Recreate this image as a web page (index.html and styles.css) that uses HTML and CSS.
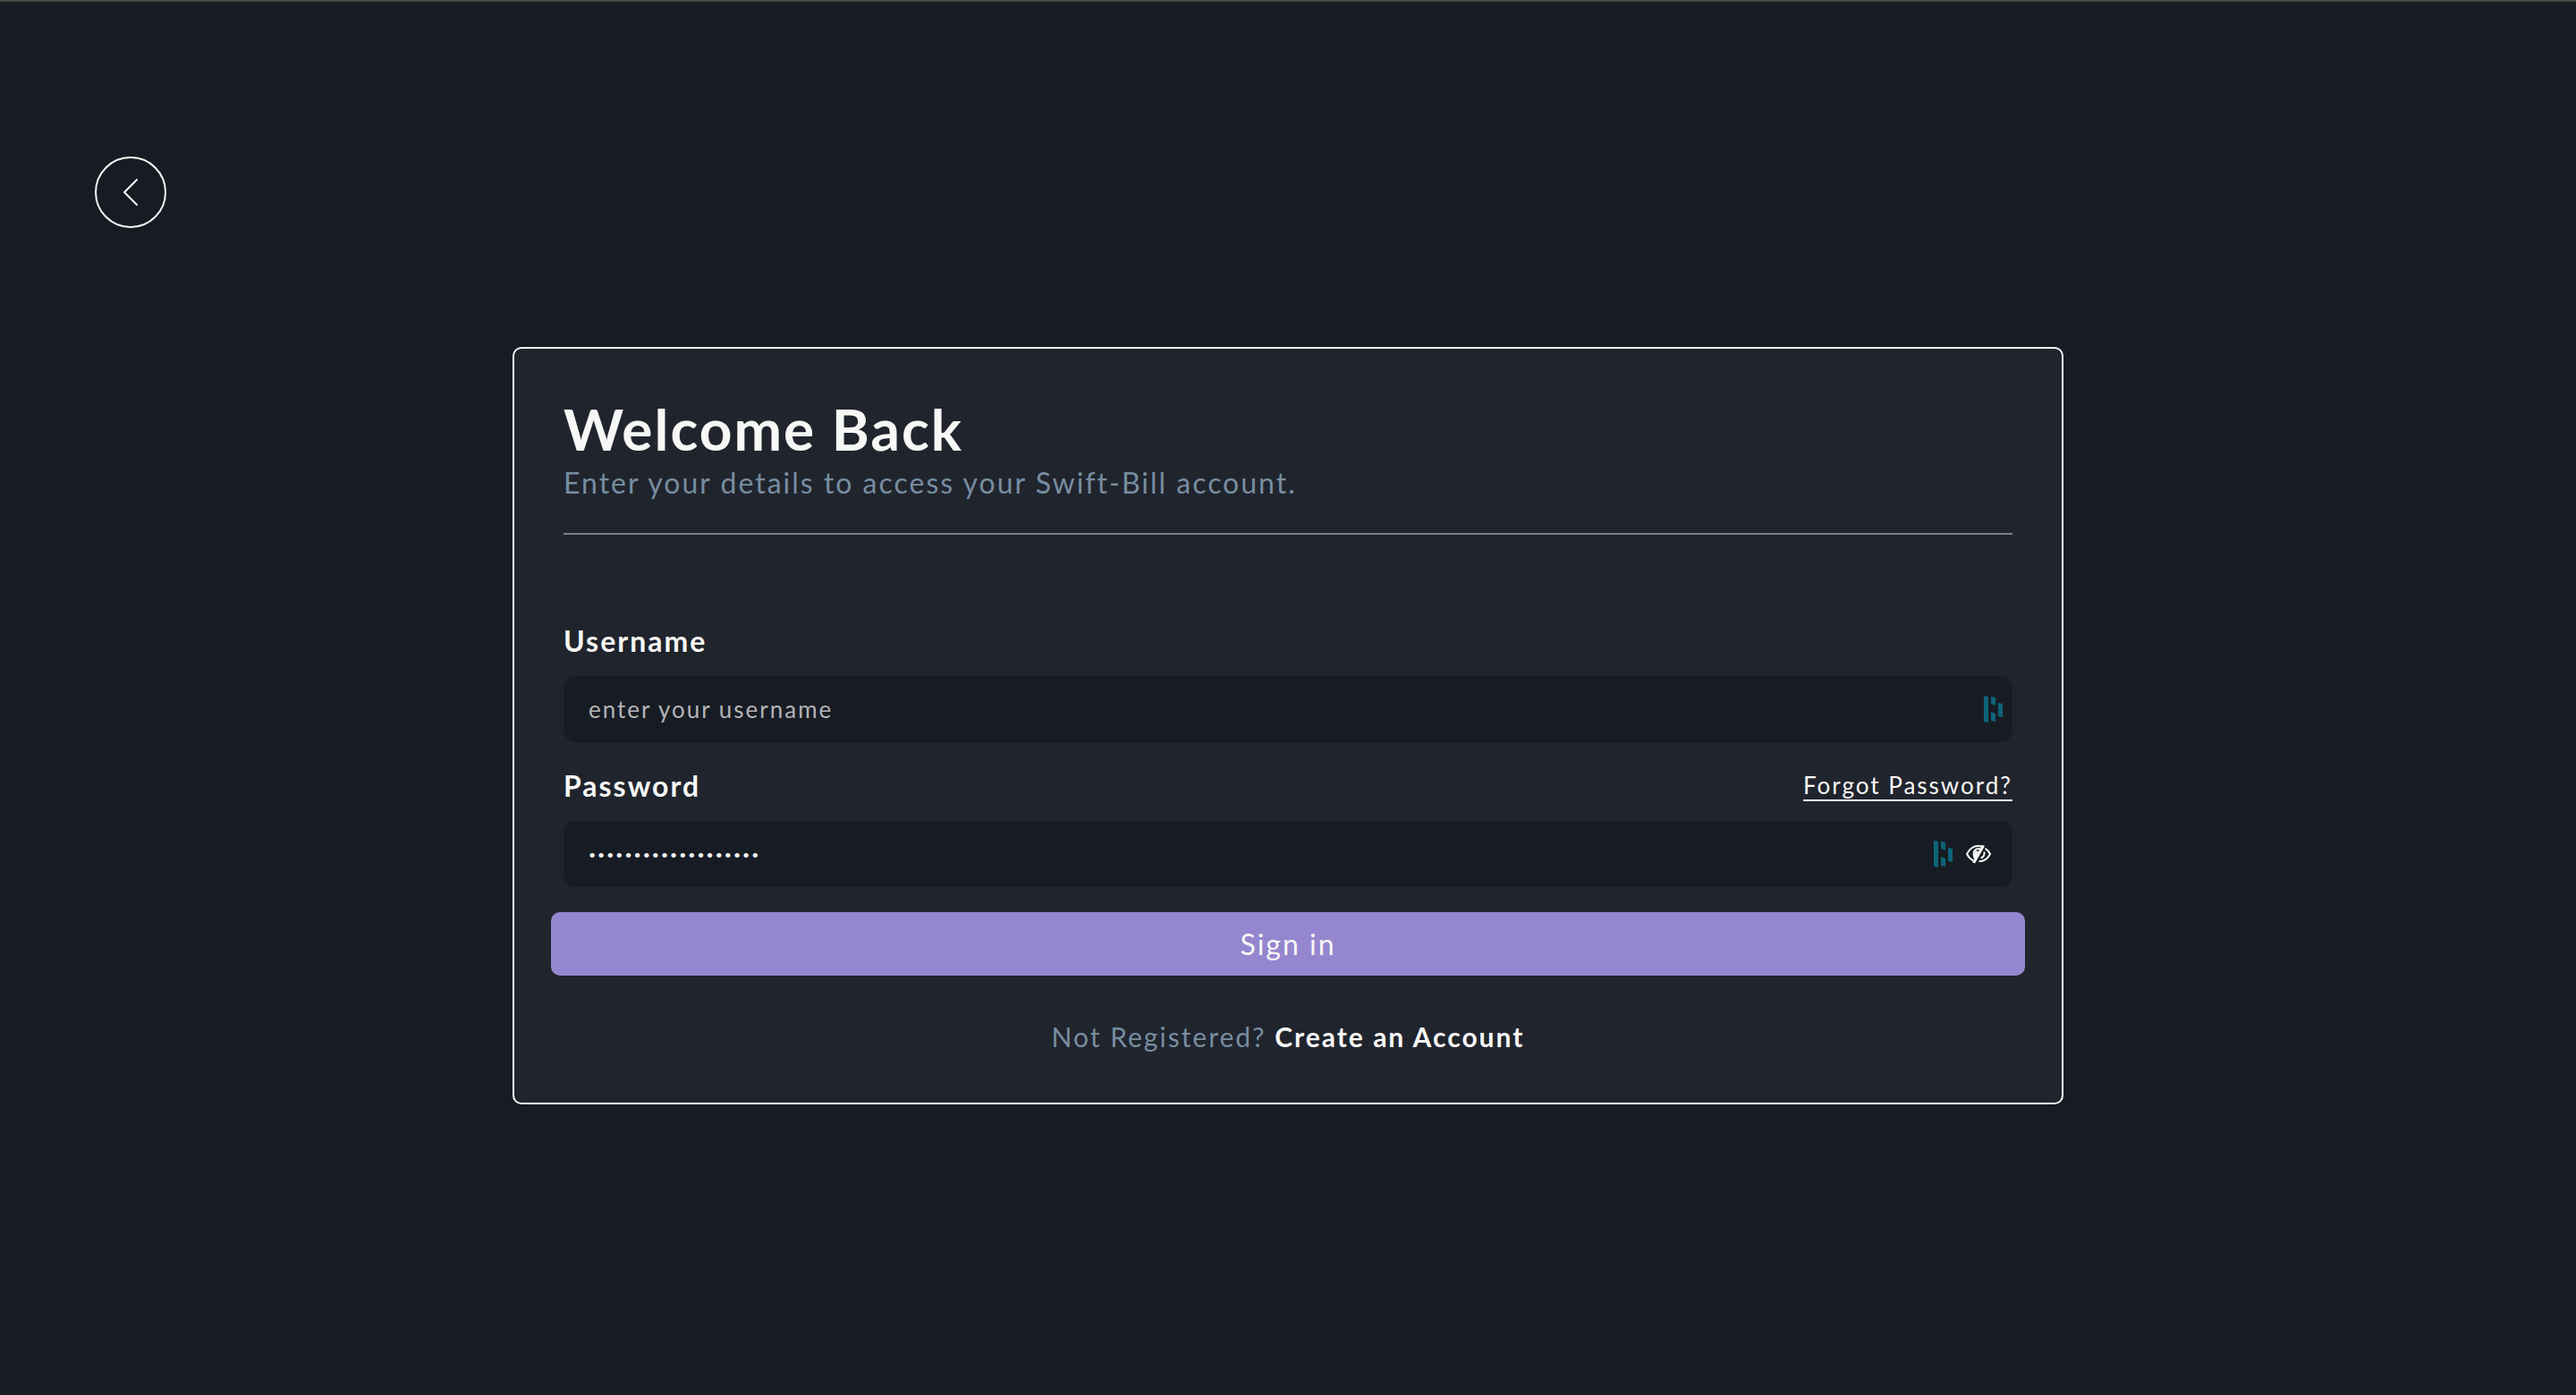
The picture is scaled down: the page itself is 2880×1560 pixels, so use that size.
FILE: index.html
```html
<!DOCTYPE html>
<html lang="en">
<head>
  <meta charset="utf-8">
  <meta name="viewport" content="width=device-width, initial-scale=1">
  <title>Swift-Bill | Sign in</title>
  <link rel="stylesheet" href="styles.css">
</head>
<body>
  <header class="topbar">
    <button class="back" type="button" aria-label="Go back">
      <svg viewBox="0 0 18 32" width="18" height="32" fill="none" stroke="currentColor" stroke-width="2" stroke-linecap="round" stroke-linejoin="round" aria-hidden="true"><path d="M16 2 2 16l14 14"/></svg>
    </button>
  </header>
  <main class="page">
    <section class="card">
      <div class="intro">
        <h1 class="title">Welcome Back</h1>
        <p class="subtitle">Enter your details to access your Swift-Bill account.</p>
      </div>
      <form class="form">
        <div class="field">
          <label class="label" for="username">Username</label>
          <div class="control">
            <input class="input" id="username" type="text" placeholder="enter your username">
            <svg class="manager" viewBox="0 0 22 30" width="22" height="30" aria-hidden="true"><path d="M0 0l5 1v29l-5-1zM8 1l5 1v9l-5-2zM8 18l5 2v9l-5-1zM16 8l5 1v15l-5-1z"/></svg>
          </div>
        </div>
        <div class="field">
          <div class="label-row">
            <label class="label" for="password">Password</label>
            <a class="forgot" href="#forgot">Forgot Password?</a>
          </div>
          <div class="control control-password">
            <input class="input input-password" id="password" type="password" value="swiftbill-password1">
            <svg class="manager" viewBox="0 0 22 30" width="22" height="30" aria-hidden="true"><path d="M0 0l5 1v29l-5-1zM8 1l5 1v9l-5-2zM8 18l5 2v9l-5-1zM16 8l5 1v15l-5-1z"/></svg>
            <button class="reveal" type="button" aria-label="Show password">
              <svg viewBox="0 0 28 22" width="28" height="22" fill="none" stroke="currentColor" stroke-width="2" aria-hidden="true"><path d="M17 2.200C9 .9 3.700 5.500 1 11c1.600 3.200 4 5.800 7 7.300M21.500 4.800C24 6.300 25.800 8.500 27 11c-2.500 5-7 8.300-12.500 8.200"/><path d="M15.500 5.200c-4-.8-7 2-7 5.600 0 1.700.6 3 1.500 4M20.500 8.500c.3 3.800-1.500 6.200-4 7"/><path d="M17.800.8 21 2 10 21.500 7 20.300z" fill="currentColor" stroke="none"/><path d="M12 7.500 9.500 16" stroke-width="3"/></svg>
            </button>
          </div>
        </div>
        <button class="submit" type="submit">Sign in</button>
      </form>
      <p class="register">Not Registered? <a class="create" href="#register">Create an Account</a></p>
    </section>
  </main>
</body>
</html>
```
FILE: styles.css
```css
* {
  box-sizing: border-box;
}

body {
  margin: 0;
  min-height: 100vh;
  border-top: 2px solid #464847;
  background: #171c24;
  color: #f7f7f5;
  font-family: Lato, "Liberation Sans", sans-serif;
  font-size: 32px;
  font-weight: 400;
  line-height: 40px;
  letter-spacing: 2px;
}

button,
input {
  font: inherit;
  letter-spacing: inherit;
  color: inherit;
}

button {
  padding: 0;
  border: 0;
  background: none;
  cursor: pointer;
}

.topbar {
  padding: 173px 106px 0;
}

.back {
  display: flex;
  align-items: center;
  justify-content: center;
  width: 80px;
  height: 80px;
  border: 2px solid currentColor;
  border-radius: 50%;
}

.page {
  padding: 133px 24px 64px;
}

.card {
  max-width: 1734px;
  margin: 0 auto;
  padding: 50px 55px 54px;
  border: 2px solid #f7f7f5;
  border-radius: 10px;
  background: #20242d;
}

.intro {
  padding-bottom: 36px;
  border-bottom: 2px solid #808080;
}

.title {
  margin: 0;
  font-size: 64px;
  font-weight: 700;
  line-height: 80px;
}

.subtitle {
  margin: 0;
  color: #778da0;
}

.form {
  display: flex;
  flex-direction: column;
  gap: 28px;
  margin-top: 98px;
}

.field {
  display: flex;
  flex-direction: column;
  gap: 18px;
}

.label {
  font-weight: 700;
  line-height: 42px;
}

.label-row {
  display: flex;
  align-items: center;
  justify-content: space-between;
}

.forgot {
  border-bottom: 2px solid currentColor;
  color: inherit;
  font-size: 26px;
  line-height: 32px;
  text-decoration: none;
}

.control {
  display: flex;
  align-items: center;
  height: 74px;
  padding-right: 10px;
  border-radius: 14px;
  background: #171c24;
}

.control-password {
  padding-right: 24px;
}

.input {
  flex: 1;
  min-width: 0;
  height: 100%;
  padding: 0 28px;
  border: 0;
  outline: 0;
  background: none;
  font-size: 26px;
}

.input-password {
  font-size: 14px;
}

.input::placeholder {
  color: #b4b4b4;
  opacity: 1;
}

.manager {
  fill: #0e6478;
}

.reveal {
  display: flex;
  margin-left: 14px;
}

.submit {
  height: 71px;
  margin: 0 -14px;
  border-radius: 10px;
  background: #9586d0;
}

.register {
  margin: 48px 0 0;
  color: #778da0;
  font-size: 30px;
  text-align: center;
}

.create {
  color: #f7f7f5;
  font-weight: 700;
  text-decoration: none;
}
```
